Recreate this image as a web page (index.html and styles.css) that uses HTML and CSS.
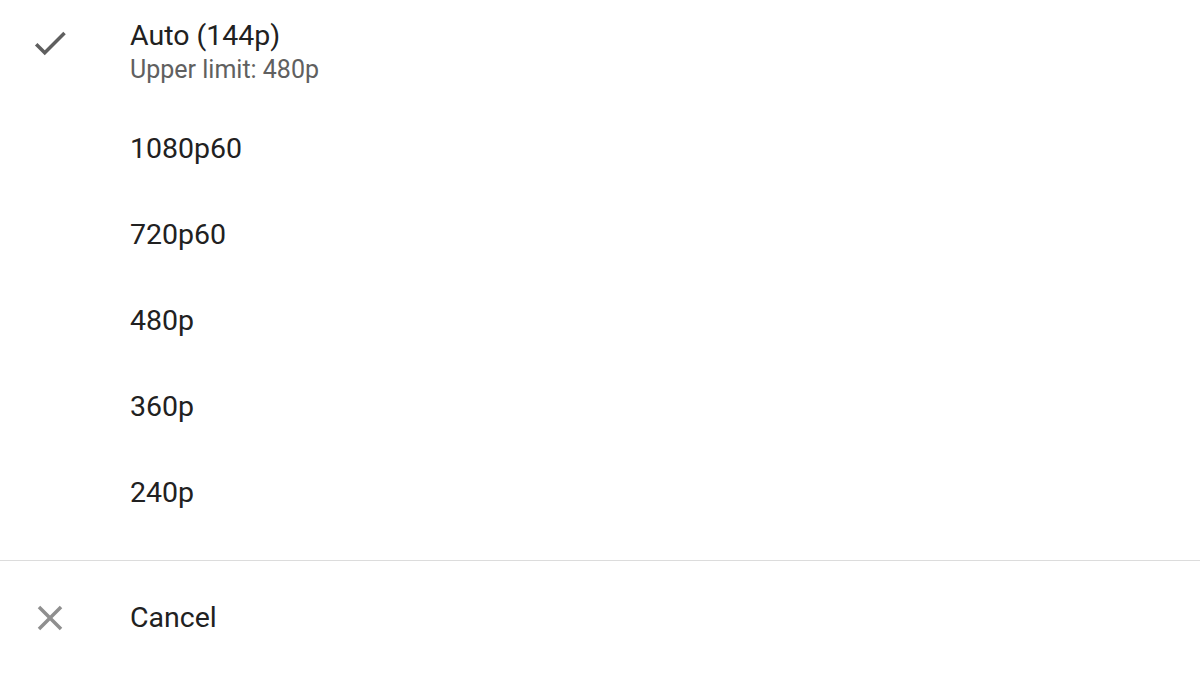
FILE: index.html
```html
<!DOCTYPE html>
<html lang="en">
<head>
    <meta charset="UTF-8">
    <title>Quality</title>
    <link rel="stylesheet" href="styles.css">
</head>
<body>
    <div class="sheet">
        <ul class="options">
            <li class="option option-auto">
                <span class="icon">
                    <svg viewBox="0 0 24 24" width="42" height="42"><path class="check" d="M9 16.17L4.83 12l-1.42 1.41L9 19 21 7l-1.41-1.41z"/></svg>
                </span>
                <div class="label">
                    <div class="title">Auto (144p)</div>
                    <div class="sub">Upper limit: 480p</div>
                </div>
            </li>
            <li class="option"><span class="icon"></span><div class="title">1080p60</div></li>
            <li class="option"><span class="icon"></span><div class="title">720p60</div></li>
            <li class="option"><span class="icon"></span><div class="title">480p</div></li>
            <li class="option"><span class="icon"></span><div class="title">360p</div></li>
            <li class="option"><span class="icon"></span><div class="title">240p</div></li>
        </ul>
        <div class="cancel">
            <div class="option">
                <span class="icon">
                    <svg viewBox="0 0 24 24" width="42" height="42"><path class="close" d="M19 6.41L17.59 5 12 10.59 6.41 5 5 6.41 10.59 12 5 17.59 6.41 19 12 13.41 17.59 19 19 17.59 13.41 12z"/></svg>
                </span>
                <div class="title">Cancel</div>
            </div>
        </div>
    </div>
</body>
</html>
```

FILE: styles.css
```css
body{
    margin: 0;
    background: #fff;
    font-family: Roboto, "Noto Sans", sans-serif;
    color: #212121;
}
.sheet{
    width: 1200px;
    height: 675px;
    overflow: hidden;
}
.options{
    list-style: none;
    margin: 0;
    padding: 0 0 24px 0;
    border-bottom: 1px solid #dcdcdc;
}
.option{
    display: flex;
    align-items: center;
    height: 86px;
}
.icon{
    width: 101px;
    padding-left: 29px;
    flex-shrink: 0;
    display: flex;
}
.title{
    font-size: 28.5px;
    line-height: 32px;
}
.option-auto{
    height: auto;
    align-items: flex-start;
    padding: 20px 0 21px 0;
}
.option-auto .icon{
    margin-top: 2px;
}
.sub{
    font-size: 25px;
    line-height: 30px;
    margin-top: 3px;
    color: #606060;
}
.check{
    fill: #5f5f5f;
}
.close{
    fill: #8f8f8f;
}
.cancel{
    padding-top: 14px;
}
```
